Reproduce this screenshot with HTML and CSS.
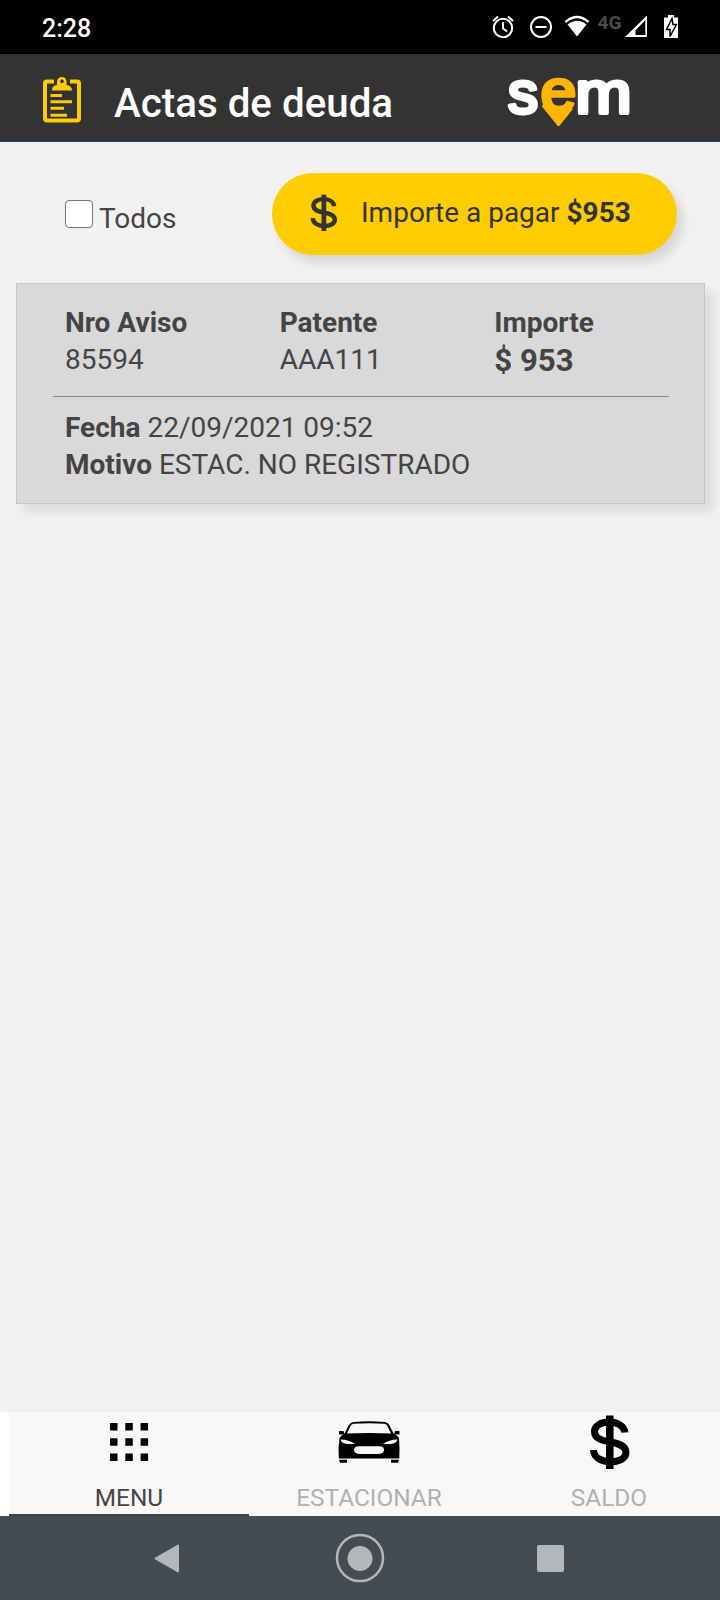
FILE: index.html
```html
<!DOCTYPE html>
<html lang="es">
<head>
<meta charset="utf-8">
<title>Actas de deuda</title>
<link rel="stylesheet" href="styles.css">
</head>
<body>
<div class="screen">
  <div class="status">
    <span class="time">2:28</span>
    <svg class="status-icons" viewBox="484 0 200 54" width="200" height="54" fill="none" stroke="#fff" stroke-width="2">
      <circle cx="503" cy="28" r="9.200"/><path d="M503 22v6.500l4 3M493 21l5-4.500M513 21l-5-4.500"/>
      <circle cx="541" cy="27" r="10"/><path d="M535.500 27h11"/>
      <path d="M565.500 22q11.500-10 23 0" stroke-width="2.400"/><path d="M567.500 24.500q9.500-7.500 19 0L577 36.500z" fill="#fff" stroke="none"/>
      <text class="net" x="597.500" y="28.500" textLength="24" lengthAdjust="spacingAndGlyphs">4G</text>
      <path d="M625 37L647 15.500V37z" fill="#fff" stroke="none"/><path d="M635.500 35V30.500L645.300 20V35z" fill="#000" stroke="none"/>
      <path d="M664 17.500h4V15h6v2.500h4V38h-14z" fill="#fff" stroke="none"/><path d="M672 18.500l-5.500 11h3.500v7l6.500-12H673z" fill="#fff" stroke="#000" stroke-width="1.500"/>
    </svg>
  </div>
  <header class="bar">
    <svg class="clip" viewBox="0 0 38 48" width="38" height="48">
      <path d="M11 5.500H4a2 2 0 0 0-2 2v35a2 2 0 0 0 2 2h30a2 2 0 0 0 2-2v-35a2 2 0 0 0-2-2h-7" fill="none" stroke="#fc0" stroke-width="4"/>
      <path fill="#fc0" fill-rule="evenodd" d="M9 14.500c0-3.500 2-5 5-5.500C13.500 4 15 1 19 1s5 3 4.500 8c3 .5 5.500 2 5.500 5.500zM19 3.500a1.800 1.800 0 1 0 .01 0z"/>
      <path d="M7.500 19.500h11.500M7.500 25.800h21.500M7.500 32.300h13.500M7.500 39.300h16.500" stroke="#fc0" stroke-width="3"/>
    </svg>
    <h1 class="title">Actas de deuda</h1>
    <svg class="logo" viewBox="504 70 132 62" width="132" height="62">
      <text class="logo-w" x="508" y="113" textLength="30" lengthAdjust="spacingAndGlyphs">s</text>
      <path d="M543.500 106L558.500 124.500 571 109 565 111H550z" fill="#ffb400" stroke="#ffb400" stroke-width="3" stroke-linejoin="round"/>
      <text class="logo-e" x="540.500" y="111" textLength="36" lengthAdjust="spacingAndGlyphs">e</text>
      <text class="logo-w" x="575.500" y="113" textLength="56" lengthAdjust="spacingAndGlyphs">m</text>
    </svg>
  </header>
  <main class="content">
    <div class="tools">
      <label class="all"><input class="check" type="checkbox"><span class="all-text">Todos</span></label>
      <button class="pay">
        <svg viewBox="13 2.500 40 56" width="28" height="38"><path d="M48 20.500C46.500 6.500 17.500 7 17.500 19.500c0 7 7 9 15.500 10.500s16 3.500 16 10.500c0 12.500-32 13-32.500-2.500" fill="none" stroke="#333" stroke-width="6.500"/><path d="M32.800 3.500v53.500" stroke="#333" stroke-width="7"/></svg>
        <span>Importe a pagar <b>$953</b></span>
      </button>
    </div>
    <section class="card">
      <div class="cols">
        <div><b>Nro Aviso</b><br>85594</div>
        <div><b>Patente</b><br>AAA111</div>
        <div><b>Importe</b><br><b class="amount">$ 953</b></div>
      </div>
      <div class="detail">
        <div><b>Fecha</b> 22/09/2021 09:52</div>
        <div><b>Motivo</b> ESTAC. NO REGISTRADO</div>
      </div>
    </section>
  </main>
  <nav class="tabs">
    <a class="tab active">
      <svg viewBox="0 0 64 60" width="64" height="60"><path d="M13 11h7.500v7.500H13zM28.300 11h7.500v7.500h-7.500zM43.600 11h7.500v7.500h-7.500zM13 26.300h7.500v7.500H13zM28.300 26.300h7.500v7.500h-7.500zM43.600 26.300h7.500v7.500h-7.500zM13 41.600h7.500v7.500H13zM28.300 41.600h7.500v7.500h-7.500zM43.600 41.600h7.500v7.500h-7.500z"/></svg>
      <span>MENU</span>
    </a>
    <a class="tab">
      <svg viewBox="337 1412 64 60" width="64" height="60">
        <path fill-rule="evenodd" d="M339.500 1438q2-3 5-4.500l4-8q1.500-3 5-3.500 15.500-1.500 31 0 4 .5 5 3.500l4 8q4 2 5.500 4.500 .8 9 .3 20.500h-60.500q-.8-11 .7-20.500zM347 1433.500q22-1 44 0l-3.500-7.500q-1-2-3-2.200-15.500-1.300-31 0-2 .2-3 2.200zM340.500 1439.500q1 4 7 4.500h7.500q-6-4.500-14.500-4.500zM397.500 1439.500q-8.500 0-14.500 4.500h7.500q6-.5 7-4.500zM354 1450q0 4 7 4h16q7 0 7-4t-5-3.800h-20q-5-.2-5 3.800z"/>
        <path d="M339 1431h4.500l1 3.500H339zM399.500 1431H395l-1 3.500h5.500zM339 1459.800h8v3h-7zM391 1459.800h8l-1 3h-7z"/>
      </svg>
      <span>ESTACIONAR</span>
    </a>
    <a class="tab">
      <svg viewBox="0 0 64 60" width="64" height="60"><path d="M48 20.500C46.500 6.500 17.500 7 17.500 19.500c0 7 7 9 15.500 10.500s16 3.500 16 10.500c0 12.500-32 13-32.500-2.500" fill="none" stroke="#000" stroke-width="7"/><path d="M32.800 3.500v53.500" stroke="#000" stroke-width="7.500"/></svg>
      <span>SALDO</span>
    </a>
  </nav>
  <div class="sysnav">
    <svg viewBox="0 1516 720 84" width="720" height="84" fill="#b2b8ba">
      <path d="M155.500 1558.500L178 1545.500v26z" stroke="#b2b8ba" stroke-width="2" stroke-linejoin="round"/>
      <circle cx="360" cy="1558" r="23" fill="none" stroke="#b2b8ba" stroke-width="2.500"/><circle cx="360" cy="1558.500" r="12.500"/>
      <rect x="537" y="1545" width="27" height="27" rx="2"/>
    </svg>
  </div>
</div>
</body>
</html>
```
FILE: styles.css
```css
* { box-sizing: border-box; }
body { margin: 0; font-family: Roboto, "Noto Sans", sans-serif; color: #444; }
.screen { width: 720px; height: 1600px; display: flex; flex-direction: column; background: #f1f1f1; overflow: hidden; }
.status { height: 54px; flex: none; background: #000; color: #fff; display: flex; align-items: center; justify-content: space-between; padding: 0 36px 0 42px; }
.time { font-size: 25px; font-weight: 500; padding-top: 3px; }
.net { font: 700 18px Roboto, sans-serif; fill: #4a4a4a; stroke: none; }
.bar { height: 88px; flex: none; background: #333; border-bottom: 1px solid #24427c; display: flex; padding-left: 43px; }
.clip { margin-top: 22px; }
.title { margin: 26px 0 0 33px; width: 393px; font-size: 40.300px; line-height: 48px; font-weight: 500; color: #fff; }
.logo { margin: 16px 0 0 -3px; overflow: visible; }
.logo-w, .logo-e { font: 400 59px "Liberation Sans", sans-serif; stroke-linejoin: round; }
.logo-w { fill: #fff; stroke: #fff; stroke-width: 4; }
.logo-e { fill: #ffb400; stroke: #ffb400; stroke-width: 3.500; }
.content { flex: 1; }
.tools { height: 141px; padding: 31px 43px 0 65px; display: flex; justify-content: space-between; align-items: flex-start; }
.all { display: flex; align-items: flex-start; gap: 6px; padding-top: 27px; font-size: 28px; line-height: 36px; }
.all-text { padding-top: 1px; }
.check { appearance: none; width: 28px; height: 28px; margin: 0; background: #fff; border: 1.500px solid #767676; border-radius: 4px; }
.pay { width: 405px; height: 82px; border: 0; border-radius: 41px; background: #fc0; box-shadow: 6px 8px 10px rgba(0,0,0,.11); color: #333; font: 28px Roboto, sans-serif; display: flex; align-items: center; padding: 0 0 3px 38px; gap: 23px; white-space: nowrap; }
.pay svg { margin-top: 1px; }
.card { margin: 0 15px 0 16px; height: 221px; background: #d9d9d9; border: 1px solid #c6c6c6; box-shadow: 8px 8px 10px rgba(0,0,0,.09); padding: 20px 35px 0 36px; font-size: 28px; line-height: 37px; }
.cols { display: grid; grid-template-columns: repeat(3, 214.667px); height: 93px; padding-left: 12px; border-bottom: 1px solid #858585; }
.amount { font-size: 31.200px; line-height: 40px; }
.detail { padding: 12px 12px 0; }
.tabs { height: 104px; flex: none; display: grid; grid-template-columns: repeat(3, 240px); padding-left: 9px; background: #fff; }
.tab { background: #f8f8f8; display: flex; flex-direction: column; align-items: center; color: #b0b0b0; font-size: 24.400px; line-height: 28px; gap: 12px; }
.active { color: #444; border-bottom: 2px solid #444; }
.sysnav { height: 84px; flex: none; background: #454c51; }
```
